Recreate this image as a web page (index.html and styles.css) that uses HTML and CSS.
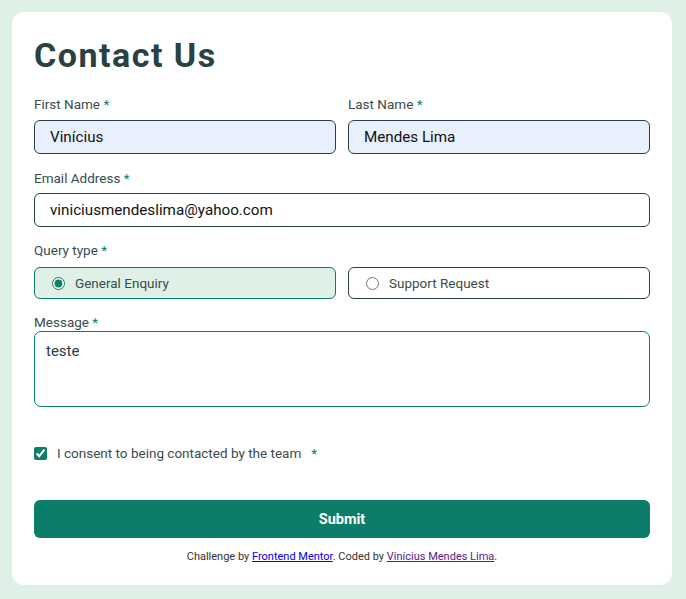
FILE: index.html
```html
<!DOCTYPE html>
<html lang="en">
<head>
<meta charset="utf-8">
<title>Contact Us</title>
<link rel="stylesheet" href="styles.css">
</head>
<body>
<main class="card">
  <h1 class="title">Contact Us</h1>
  <form class="form">
    <div class="row">
      <div class="field field-top">
        <label class="label" for="first">First Name <span class="req">*</span></label>
        <input class="input filled" id="first" type="text" value="Vinícius">
      </div>
      <div class="field field-top">
        <label class="label" for="last">Last Name <span class="req">*</span></label>
        <input class="input filled" id="last" type="text" value="Mendes Lima">
      </div>
    </div>
    <div class="field field-email">
      <label class="label" for="email">Email Address <span class="req">*</span></label>
      <input class="input" id="email" type="email" value="viniciusmendeslima@yahoo.com">
    </div>
    <div class="field field-query">
      <span class="label">Query type <span class="req">*</span></span>
      <div class="row">
        <label class="option selected">
          <input class="radio" type="radio" name="q" checked>
          <span>General Enquiry</span>
        </label>
        <label class="option">
          <input class="radio" type="radio" name="q">
          <span>Support Request</span>
        </label>
      </div>
    </div>
    <div class="field field-message">
      <label class="label" for="msg">Message <span class="req">*</span></label>
      <textarea class="textarea" id="msg">teste</textarea>
    </div>
    <label class="consent">
      <input class="check" type="checkbox" checked>
      <span>I consent to being contacted by the team</span>
      <span class="req req-consent">*</span>
    </label>
    <button class="submit" type="button">Submit</button>
  </form>
  <p class="attribution">Challenge by <a href="#fm" class="link">Frontend Mentor</a>. Coded by <a href="#" class="link visited">Vinícius Mendes Lima</a>.</p>
</main>
</body>
</html>
```
FILE: styles.css
```css
* { box-sizing: border-box; }

body {
  margin: 0;
  padding: 12px 14px 15px 12px;
  background: #dff1e7;
  font-family: Roboto, "Liberation Sans", sans-serif;
  color: #2a4144;
}

.card {
  background: #ffffff;
  border-radius: 12px;
  padding: 22px 22px 22px 22px;
}

.title {
  margin: 4px 0 0;
  font-size: 34px;
  line-height: 34px;
  font-weight: 700;
  letter-spacing: 1.5px;
  color: #2a4144;
}

.form {
  display: flex;
  flex-direction: column;
}

.row {
  display: grid;
  grid-template-columns: 1fr 1fr;
  gap: 12px;
}

.field {
  display: flex;
  flex-direction: column;
  gap: 6px;
}

.field-top { margin-top: 24px; gap: 7px; }
.field-email { margin-top: 16px; }
.field-query { margin-top: 15px; gap: 8px; }
.field-message { margin-top: 15px; gap: 0; }

.label {
  font-size: 13.5px;
  line-height: 17px;
  color: #3a4c4e;
}

.req { color: #0c7d69; }

.input {
  height: 34px;
  border: 1px solid #2a4144;
  border-radius: 6px;
  padding: 0 15px;
  font-family: Roboto, "Liberation Sans", sans-serif;
  font-size: 15.2px;
  color: #111;
  background: #fff;
  outline: none;
}

.filled { background: #e8f0fe; }

.option {
  height: 32px;
  border: 1px solid #2a4144;
  border-radius: 6px;
  display: flex;
  align-items: center;
  gap: 10px;
  padding-left: 17px;
  font-size: 13.5px;
  color: #3a4c4e;
}

.option.selected {
  background: #dff1e7;
  border-color: #0c7d69;
}

.radio {
  margin: 0;
  width: 13px;
  height: 13px;
  accent-color: #0c7d69;
}

.textarea {
  height: 76px;
  border: 1px solid #0c7d69;
  border-radius: 7px;
  padding: 10px 11px 6px;
  font-family: Roboto, "Liberation Sans", sans-serif;
  font-size: 15px;
  line-height: 19px;
  color: #2a4144;
  resize: none;
  outline: none;
}

.consent {
  margin-top: 38px;
  display: flex;
  align-items: center;
  font-size: 13.5px;
  line-height: 17px;
  color: #3a4c4e;
}

.check {
  margin: 0 10px 0 0;
  width: 13px;
  height: 13px;
  accent-color: #0c7d69;
}

.req-consent { margin-left: 10px; }

.submit {
  margin-top: 38px;
  height: 38px;
  border: none;
  border-radius: 6px;
  background: #0c7d69;
  color: #fff;
  font-family: Roboto, "Liberation Sans", sans-serif;
  font-size: 14.5px;
  font-weight: 700;
}

.attribution {
  margin: 12px 0 0;
  text-align: center;
  font-size: 11px;
  line-height: 13px;
  color: #333;
}

.link { color: #0000ee; }
.link.visited { color: #551a8b; }
```
